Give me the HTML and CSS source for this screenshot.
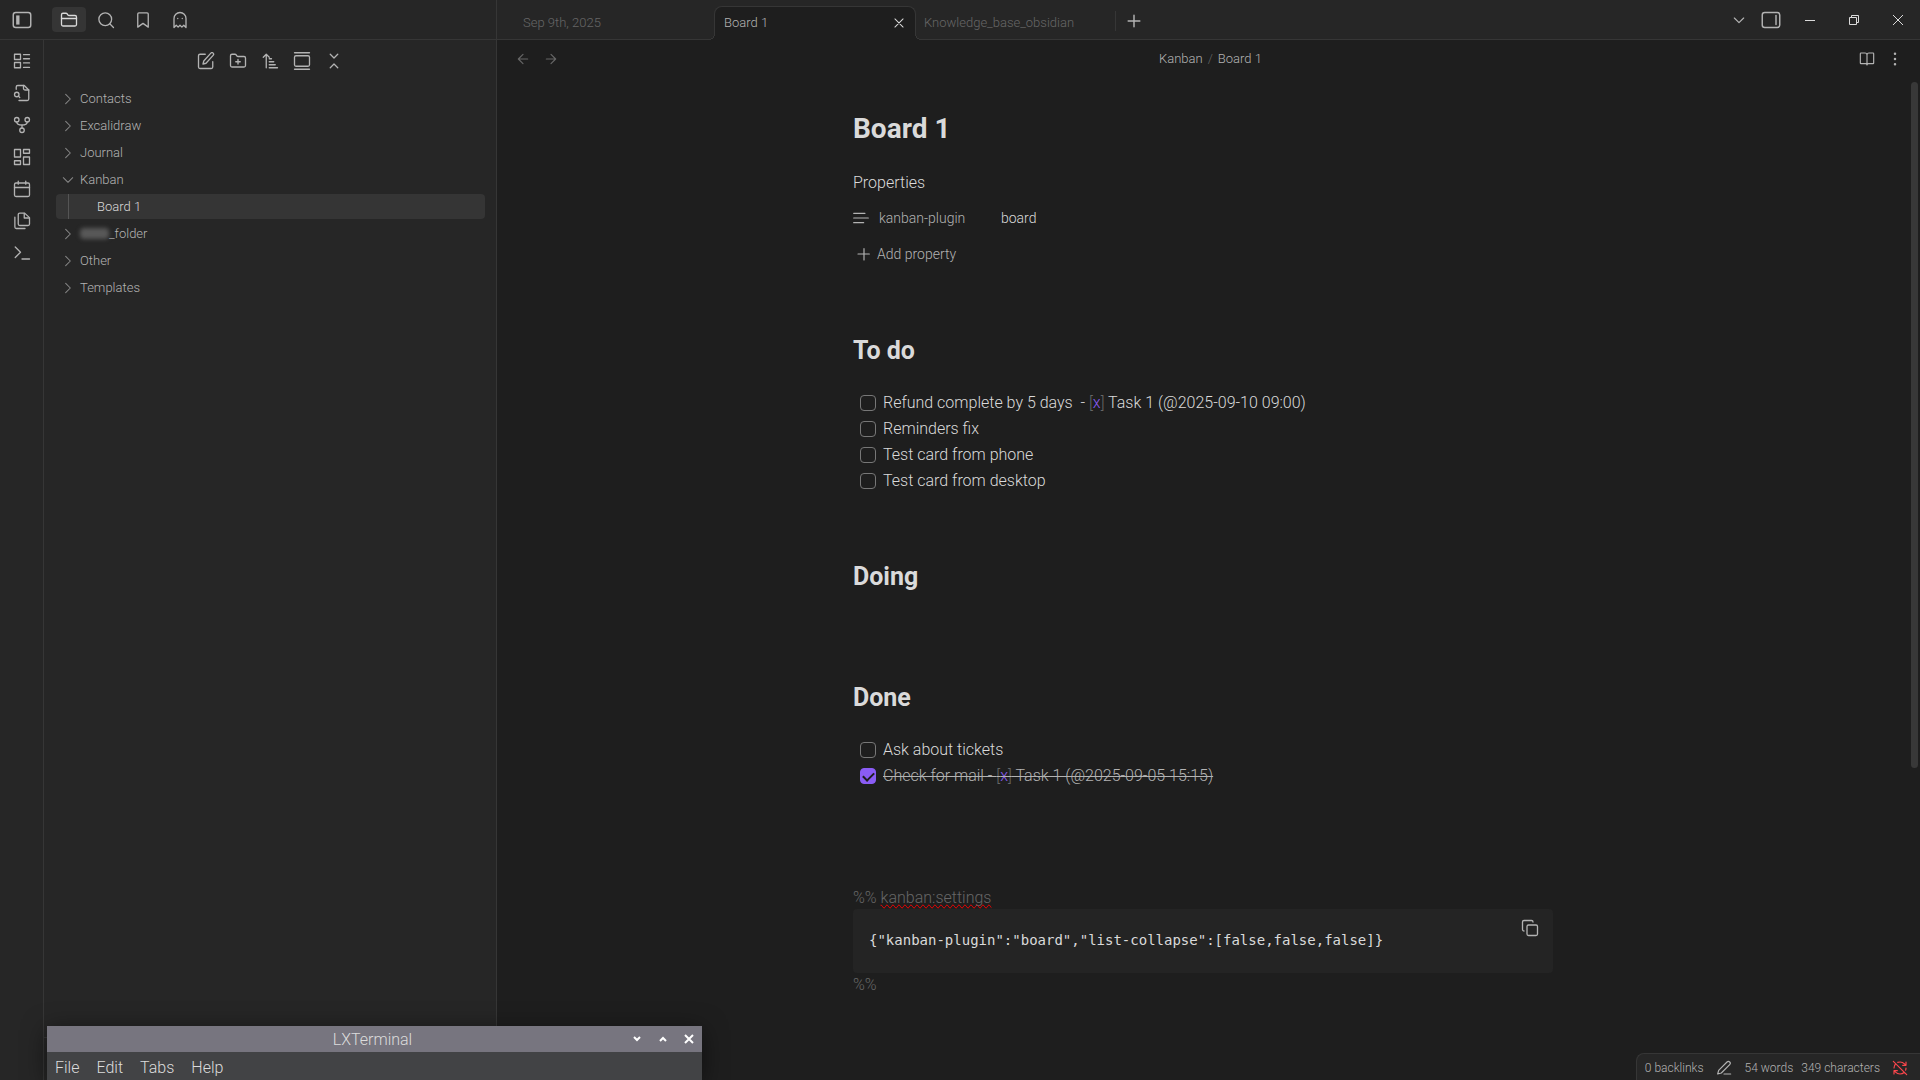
FILE: index.html
```html
<!DOCTYPE html>
<html lang="en">
<head>
<meta charset="utf-8">
<meta name="viewport" content="width=device-width, initial-scale=1">
<title>Board 1 - Obsidian</title>
<link rel="stylesheet" href="styles.css">
</head>
<body>
<div class="app">
  <header class="titlebar">
    <div class="titlebar-left">
      <div class="toggle-slot"><button class="icon-btn" aria-label="Toggle left sidebar"><svg class="icon icon-lg" viewBox="0 0 24 24"><rect x="1.5" y="3" width="21" height="18" rx="3"/><rect class="solid" x="5" y="6.500" width="4" height="11"/></svg></button></div>
      <nav class="side-tabs" aria-label="Sidebar panels">
        <button class="side-tab is-active" aria-label="Files"><svg class="icon" viewBox="0 0 24 24"><path d="M20 20a2 2 0 0 0 2-2V8a2 2 0 0 0-2-2h-7.900a2 2 0 0 1-1.690-.9L9.600 3.900A2 2 0 0 0 7.930 3H4a2 2 0 0 0-2 2v13a2 2 0 0 0 2 2Z"/><path d="M2 10h20"/></svg></button>
        <button class="side-tab" aria-label="Search"><svg class="icon" viewBox="0 0 24 24"><circle cx="11" cy="11" r="8.500"/><path d="m22 22-5-5"/></svg></button>
        <button class="side-tab" aria-label="Bookmarks"><svg class="icon" viewBox="0 0 24 24"><path d="M19 21.500l-7-5-7 5V4a1.500 1.500 0 0 1 1.500-1.500h11A1.500 1.500 0 0 1 19 4z"/></svg></button>
        <button class="side-tab" aria-label="Ghost Fade Focus"><svg class="icon" viewBox="0 0 24 24"><path d="M9 10h.01"/><path d="M15 10h.01"/><path d="M12 2a8 8 0 0 0-8 8v12l3-3 2.500 2.500L12 19l2.500 2.500L17 19l3 3V10a8 8 0 0 0-8-8z"/></svg></button>
      </nav>
    </div>
    <nav class="tabs" aria-label="Open notes">
      <button class="tab">Sep 9th, 2025</button>
      <div class="tab is-active"><a href="#note">Board 1</a><button class="icon-btn tab-close" aria-label="Close tab"><svg class="icon" viewBox="0 0 24 24"><path d="M19 5 5 19M5 5l14 14"/></svg></button></div>
      <button class="tab">Knowledge_base_obsidian</button>
      <button class="icon-btn new-tab" aria-label="New tab"><svg class="icon icon-lg" viewBox="0 0 24 24"><path d="M5 12h14M12 5v14"/></svg></button>
    </nav>
    <div class="window-tools">
      <button class="icon-btn" aria-label="Tab list"><svg class="icon icon-sm" viewBox="0 0 24 24"><path d="m5 9 7 7 7-7"/></svg></button>
      <button class="icon-btn" aria-label="Toggle right sidebar"><svg class="icon icon-lg" viewBox="0 0 24 24"><rect x="1.500" y="3" width="21" height="18" rx="3"/><path d="M18 6.500v11"/></svg></button>
    </div>
    <div class="window-controls">
      <button class="icon-btn" aria-label="Minimize"><svg class="glyph" viewBox="0 0 12 12"><path d="M1 6.500h10"/></svg></button>
      <button class="icon-btn" aria-label="Restore"><svg class="glyph" viewBox="0 0 12 12"><path d="M1.500 3.500h7v7h-7zM3.500 3.500v-2h7v7h-2"/></svg></button>
      <button class="icon-btn" aria-label="Close window"><svg class="glyph" viewBox="0 0 12 12"><path d="m1 1 10 10M11 1 1 11"/></svg></button>
    </div>
  </header>

  <div class="workspace">
    <nav class="ribbon" aria-label="Ribbon">
      <button class="icon-btn" aria-label="Layout"><svg class="icon" viewBox="0 0 24 24"><path d="M2 3h8v7H2zM2 14h8v7H2zM14 3.500h8M14 9h8M14 14.500h8M14 20.500h8"/></svg></button>
      <button class="icon-btn" aria-label="Quick switcher"><svg class="icon" viewBox="0 0 24 24"><path d="M14 2v4a2 2 0 0 0 2 2h5"/><path d="M4.300 7V4a2 2 0 0 1 2-2H15l6 6v12a2 2 0 0 1-2 2H8"/><circle cx="5" cy="14" r="3"/><path d="m9 18-1.800-1.800"/></svg></button>
      <button class="icon-btn" aria-label="Graph view"><svg class="icon" viewBox="0 0 24 24"><circle cx="12" cy="19" r="3"/><circle cx="5" cy="5" r="3"/><circle cx="19" cy="5" r="3"/><path d="M5 8c0 3 3 4 7 4s7-1 7-4M12 12v4"/></svg></button>
      <button class="icon-btn" aria-label="Canvas"><svg class="icon" viewBox="0 0 24 24"><path d="M2 2h8v10H2zM14 2h8v5h-8zM14 12h8v10h-8zM2 17h8v5H2z"/></svg></button>
      <button class="icon-btn" aria-label="Daily note"><svg class="icon" viewBox="0 0 24 24"><rect x="2" y="4" width="20" height="18" rx="2"/><path d="M2 10h20M7 1.500v4M17 1.500v4"/></svg></button>
      <button class="icon-btn" aria-label="Templates"><svg class="icon" viewBox="0 0 24 24"><path d="M15.500 1.500H9a2 2 0 0 0-2 2V16a2 2 0 0 0 2 2h11a2 2 0 0 0 2-2V7.500z"/><path d="M15 2v6h6M2.500 7v13a2 2 0 0 0 2 2H16"/></svg></button>
      <button class="icon-btn" aria-label="Command palette"><svg class="icon" viewBox="0 0 24 24"><path d="m3 18 7-7-7-7M12 20h10"/></svg></button>
    </nav>

    <aside class="sidebar">
      <div class="file-tools">
        <button class="icon-btn" aria-label="New note"><svg class="icon" viewBox="0 0 24 24"><path d="M11 3H4a2 2 0 0 0-2 2v15a2 2 0 0 0 2 2h15a2 2 0 0 0 2-2v-7"/><path d="M18.500 1.500a2.100 2.100 0 0 1 3 3L12 15l-4 1 1-4z"/></svg></button>
        <button class="icon-btn" aria-label="New folder"><svg class="icon" viewBox="0 0 24 24"><path d="M12 10v6M9 13h6M20 20a2 2 0 0 0 2-2V8a2 2 0 0 0-2-2h-7.900a2 2 0 0 1-1.690-.9L9.600 3.900A2 2 0 0 0 7.930 3H4a2 2 0 0 0-2 2v13a2 2 0 0 0 2 2Z"/></svg></button>
        <button class="icon-btn" aria-label="Sort order"><svg class="icon" viewBox="0 0 24 24"><path d="m3 7 4-4 4 4M7 3v18M11 9h3M11 13h6M11 17h8M11 21h11"/></svg></button>
        <button class="icon-btn" aria-label="Auto-reveal"><svg class="icon" viewBox="0 0 24 24"><path d="M2 1h20M2 23h20"/><rect x="2" y="5" width="20" height="14" rx="2"/></svg></button>
        <button class="icon-btn" aria-label="Collapse all"><svg class="icon" viewBox="0 0 24 24"><path d="m7 21 5-5 5 5M7 3l5 5 5-5"/></svg></button>
      </div>
      <ul class="tree">
        <li><button class="tree-row"><svg class="icon chevron" viewBox="0 0 24 24"><path d="m8 4 8 8-8 8"/></svg>Contacts</button></li>
        <li><button class="tree-row"><svg class="icon chevron" viewBox="0 0 24 24"><path d="m8 4 8 8-8 8"/></svg>Excalidraw</button></li>
        <li><button class="tree-row"><svg class="icon chevron" viewBox="0 0 24 24"><path d="m8 4 8 8-8 8"/></svg>Journal</button></li>
        <li><button class="tree-row"><svg class="icon chevron" viewBox="0 0 24 24"><path d="m4 8 8 8 8-8"/></svg>Kanban</button></li>
        <li><a class="tree-row tree-file" href="#note">Board 1</a></li>
        <li><button class="tree-row"><svg class="icon chevron" viewBox="0 0 24 24"><path d="m8 4 8 8-8 8"/></svg><span class="redacted"></span>_folder</button></li>
        <li><button class="tree-row"><svg class="icon chevron" viewBox="0 0 24 24"><path d="m8 4 8 8-8 8"/></svg>Other</button></li>
        <li><button class="tree-row"><svg class="icon chevron" viewBox="0 0 24 24"><path d="m8 4 8 8-8 8"/></svg>Templates</button></li>
      </ul>
      <div class="vault-bar"></div>
    </aside>

    <main class="pane">
      <div class="pane-header">
        <div class="history">
          <button class="icon-btn" aria-label="Back"><svg class="icon icon-sm" viewBox="0 0 24 24"><path d="m12 19-7-7 7-7M19 12H5"/></svg></button>
          <button class="icon-btn" aria-label="Forward"><svg class="icon icon-sm" viewBox="0 0 24 24"><path d="M5 12h14M12 5l7 7-7 7"/></svg></button>
        </div>
        <div class="crumbs"><a href="#kanban">Kanban</a><span class="slash">/</span><a href="#note">Board 1</a></div>
        <div class="pane-actions">
          <button class="icon-btn" aria-label="Reading view"><svg class="icon icon-sm" viewBox="0 0 24 24"><path d="M12 6v15M3 19a1 1 0 0 1-1-1V4a1 1 0 0 1 1-1h6a3 3 0 0 1 3 3 3 3 0 0 1 3-3h6a1 1 0 0 1 1 1v14a1 1 0 0 1-1 1h-7a2 2 0 0 0-2 2 2 2 0 0 0-2-2z"/></svg></button>
          <button class="icon-btn" aria-label="More options"><svg class="icon icon-sm dots" viewBox="0 0 24 24"><circle cx="12" cy="4" r="1"/><circle cx="12" cy="12" r="1"/><circle cx="12" cy="20" r="1"/></svg></button>
        </div>
      </div>
      <div class="scroller">
        <article class="note" id="note">
          <h1>Board 1</h1>
          <section class="properties">
            <div class="properties-title">Properties</div>
            <div class="property">
              <svg class="icon icon-sm" viewBox="0 0 24 24"><path d="M1 5h17M1 12h22M1 19h15"/></svg>
              <label for="prop">kanban-plugin</label>
              <input id="prop" type="text" value="board">
            </div>
            <button class="add-property"><svg class="icon icon-sm" viewBox="0 0 24 24"><path d="M3 12h17M12 4v17"/></svg>Add property</button>
          </section>

          <h2>To do</h2>
          <ul class="tasks">
            <li><label><input type="checkbox"><span>Refund complete by 5 days&nbsp; - <i>[<b>x</b>]</i> Task 1 (@2025-09-10 09:00)</span></label></li>
            <li><label><input type="checkbox"><span>Reminders fix</span></label></li>
            <li><label><input type="checkbox"><span>Test card from phone</span></label></li>
            <li><label><input type="checkbox"><span>Test card from desktop</span></label></li>
          </ul>

          <h2 class="empty-section">Doing</h2>

          <h2>Done</h2>
          <ul class="tasks">
            <li><label><input type="checkbox"><span>Ask about tickets</span></label></li>
            <li><label><input type="checkbox" checked><span>Check for mail - <i>[<b>x</b>]</i> Task 1 (@2025-09-05 15:15)</span></label></li>
          </ul>

          <div class="comment settings">%% <span class="misspelled">kanban:settings</span></div>
          <div class="code-block">
            <code>{"kanban-plugin":"board","list-collapse":[false,false,false]}</code>
            <button class="icon-btn" aria-label="Copy code"><svg class="icon" viewBox="0 0 24 24"><rect x="8" y="8" width="14" height="14" rx="2"/><path d="M4 16a2 2 0 0 1-2-2V4a2 2 0 0 1 2-2h10a2 2 0 0 1 2 2"/></svg></button>
          </div>
          <div class="comment">%%</div>
        </article>
        <div class="scrollbar"><div class="thumb"></div></div>
      </div>
    </main>
  </div>

  <footer class="status-bar">
    <span>0 backlinks</span>
    <svg class="icon" viewBox="0 0 24 24"><path d="M12 21h10M16.500 3a2.600 2.600 0 0 1 4 4L8 19.500 2.500 21 4 15.500z"/></svg>
    <span>54 words</span>
    <span>349 characters</span>
    <svg class="icon sync-off" viewBox="0 0 24 24"><path d="M21 8 18.700 5.700A9.500 9.500 0 0 0 12 3c-1.200 0-2.300.2-3.400.6M21 12a9 9 0 0 1-.6 3.300M21 3v5h-5M3 12a9 9 0 0 1 2.600-6.400M3 16l2.300 2.300A9.500 9.500 0 0 0 12 21c2.400 0 4.700-1 6.400-2.600M8 16H3v5M2 2l20 20"/></svg>
  </footer>

  <section class="terminal" aria-label="LXTerminal">
    <div class="terminal-title">
      <span>LXTerminal</span>
      <div class="terminal-controls">
        <button class="icon-btn" aria-label="Minimize terminal"><svg viewBox="0 0 10 10"><path d="m2 3 3 3 3-3"/></svg></button>
        <button class="icon-btn" aria-label="Maximize terminal"><svg viewBox="0 0 10 10"><path d="m2 7 3-3 3 3"/></svg></button>
        <button class="icon-btn" aria-label="Close terminal"><svg viewBox="0 0 10 10"><path d="m1 1 8 8M9 1 1 9"/></svg></button>
      </div>
    </div>
    <div class="terminal-menu"><button>File</button><button>Edit</button><button>Tabs</button><button>Help</button></div>
  </section>
</div>
</body>
</html>
```
FILE: styles.css
```css
:root {
  --bg: #1e1e1e;
  --bg-side: #262626;
  --line: #363636;
  --hover: #353535;
  --text: #dadada;
  --muted: #b3b3b3;
  --faint: #666;
  --accent: #8a5cf5;
}

* { box-sizing: border-box; }

body {
  margin: 0;
  background: var(--bg);
  color: var(--text);
  font: 300 16px/24px Roboto, "Noto Sans", sans-serif;
}

button, input { font: inherit; color: inherit; }
button { padding: 0; border: 0; background: none; }
a { color: inherit; text-decoration: none; }
ul { margin: 0; padding: 0; list-style: none; }

.app {
  position: relative;
  display: flex;
  flex-direction: column;
  min-height: 100vh;
  overflow: hidden;
}

.icon {
  display: block;
  flex: none;
  width: 18px;
  height: 18px;
  fill: none;
  stroke: currentColor;
  stroke-width: 1.75;
  stroke-linecap: round;
  stroke-linejoin: round;
}
.icon-sm { width: 16px; height: 16px; }
.icon-lg { width: 20px; height: 20px; }
.icon .solid { fill: currentColor; stroke: none; }
.dots { fill: currentColor; }
.icon-btn {
  display: flex;
  align-items: center;
  justify-content: center;
  color: var(--muted);
}

/* Title bar */
.titlebar {
  display: flex;
  height: 40px;
  background: var(--bg-side);
  border-bottom: 1px solid var(--line);
}
.titlebar-left {
  display: flex;
  align-items: center;
  flex: 0 0 497px;
  border-right: 1px solid var(--line);
}
.toggle-slot {
  display: flex;
  justify-content: center;
  width: 44px;
}
.side-tabs { display: flex; gap: 3px; padding-left: 8px; }
.side-tab {
  display: flex;
  align-items: center;
  justify-content: center;
  width: 34px;
  height: 25px;
  border-radius: 4px;
  color: var(--muted);
}
.side-tab.is-active { background: var(--hover); color: var(--text); }

.tabs {
  display: flex;
  flex: 1;
  align-items: flex-end;
  margin-bottom: -1px;
  padding-left: 18px;
  font-size: 13px;
}
.tab {
  display: flex;
  align-items: center;
  flex: 0 1 199px;
  height: 34px;
  padding: 0 8px;
  color: var(--faint);
  white-space: nowrap;
}
.tab.is-active {
  position: relative;
  justify-content: space-between;
  flex-basis: 202px;
  padding: 0 10px 0 9px;
  background: var(--bg);
  border: 1px solid var(--line);
  border-bottom-color: var(--bg);
  border-radius: 8px 8px 0 0;
  color: var(--muted);
}
.tab.is-active::before,
.tab.is-active::after {
  content: "";
  position: absolute;
  bottom: -1px;
  width: 6px;
  height: 6px;
}
.tab.is-active::before {
  left: -6px;
  background: radial-gradient(circle at 0 0, var(--bg-side) 5px, var(--line) 5px 6px, var(--bg) 6px);
}
.tab.is-active::after {
  right: -6px;
  background: radial-gradient(circle at 100% 0, var(--bg-side) 5px, var(--line) 5px 6px, var(--bg) 6px);
}
.tab-close { width: 12px; color: var(--text); }
.tab-close .icon { width: 14px; height: 14px; }
.new-tab { justify-content: flex-start; height: 38px; }
.new-tab::before {
  content: "";
  width: 1px;
  height: 20px;
  margin-right: 8px;
  background: var(--line);
}

.window-tools { display: flex; align-items: center; gap: 14px; padding-right: 7px; }
.window-controls { display: flex; align-items: center; }
.window-controls .icon-btn { width: 44px; height: 38px; }
.glyph { width: 12px; height: 12px; fill: none; stroke: var(--text); stroke-width: 1; }

/* Workspace columns */
.workspace { display: flex; flex: 1; }
.ribbon {
  display: flex;
  flex-direction: column;
  flex: 0 0 44px;
  gap: 14px;
  padding-top: 12px;
  background: var(--bg-side);
  border-right: 1px solid var(--line);
}
.sidebar {
  display: flex;
  flex-direction: column;
  flex: 0 0 453px;
  padding-top: 11px;
  background: var(--bg-side);
  border-right: 1px solid var(--line);
}
.file-tools {
  display: flex;
  justify-content: center;
  gap: 14px;
  height: 20px;
  margin-bottom: 15px;
}
.tree { padding: 0 11px 0 12px; font-size: 13px; color: var(--muted); }
.tree-row {
  display: flex;
  align-items: center;
  width: 100%;
  height: 25px;
  margin-bottom: 2px;
  padding-left: 5px;
  border-radius: 4px;
  text-align: left;
}
.chevron { width: 14px; height: 14px; margin-right: 5px; color: #888; }
.tree-file { padding-left: 12px; background: var(--hover); color: var(--text); }
.tree-file::before {
  content: "";
  width: 1px;
  height: 25px;
  margin-right: 28px;
  background: #555;
}
.redacted {
  width: 29px;
  height: 11px;
  border-radius: 4px;
  background: #585858;
  filter: blur(2px);
}
.vault-bar { height: 43px; margin-top: auto; border-top: 1px solid var(--line); }

/* Note pane */
.pane { display: flex; flex-direction: column; flex: 1; min-width: 0; }
.pane-header {
  display: grid;
  grid-template-columns: 1fr auto 1fr;
  align-items: center;
  height: 38px;
  padding: 0 17px 0 18px;
  font-size: 13px;
  color: var(--muted);
}
.history, .pane-actions { display: flex; gap: 12px; }
.history .icon-btn { color: var(--faint); }
.pane-actions { justify-content: flex-end; }
.crumbs { display: flex; gap: 5px; padding-left: 3px; }
.slash { color: var(--faint); }

.scroller { display: flex; flex: 1; justify-content: center; }
.note { width: 100%; max-width: 700px; margin: 0 auto; padding-top: 31px; }
.scrollbar { flex: 0 0 11px; padding: 4px 2px; }
.thumb { width: 7px; height: 69%; border-radius: 4px; background: #383838; }

h1, h2 { margin: 0; font-weight: 700; }
h1 { font-size: 28px; line-height: 40px; }
h2 { margin-bottom: 22px; font-size: 25px; line-height: 34px; }

.properties { margin: 22px 0 68px; font-size: 14px; }
.properties-title { margin-bottom: 11px; font-size: 16px; }
.property { display: flex; align-items: center; height: 24px; margin-bottom: 12px; color: var(--muted); }
.property label { width: 122px; margin-left: 10px; }
.property input { flex: 1; padding: 0; border: 0; background: none; color: var(--text); }
.add-property { display: flex; align-items: center; gap: 5px; height: 24px; padding-left: 3px; color: var(--muted); }

.tasks { margin-bottom: 66px; }
.empty-section { margin-bottom: 87px; }
.tasks label { display: flex; align-items: center; height: 26px; padding-left: 7px; white-space: nowrap; }
.tasks span { padding-left: 4px; }
.tasks input {
  display: grid;
  place-items: center;
  flex: none;
  appearance: none;
  width: 16px;
  height: 16px;
  margin: 0 3px 0 0;
  border: 1px solid #777;
  border-radius: 4px;
}
.tasks input:checked { border-color: var(--accent); background: var(--accent); }
.tasks input:checked::before {
  content: "";
  width: 9px;
  height: 5px;
  border: solid var(--bg);
  border-width: 0 0 2px 2px;
  transform: translateY(-1px) rotate(-45deg);
}
.tasks input:checked + span { color: var(--muted); text-decoration: line-through 1px; }
.tasks i { font-style: normal; color: var(--faint); }
.tasks b { font-weight: 300; color: var(--accent); }

.comment { color: var(--faint); }
.settings { margin-top: 97px; line-height: 23px; }
.misspelled { text-decoration: spelling-error; }
.code-block {
  display: flex;
  align-items: flex-start;
  justify-content: space-between;
  min-height: 64px;
  padding: 10px 14px 0 16px;
  border-radius: 4px;
  background: #242424;
}
code { padding-top: 9px; font: 14px/24px "DejaVu Sans Mono", monospace; }

/* Status bar sits over the lower right corner of the pane */
.status-bar {
  position: absolute;
  right: 0;
  bottom: 0;
  display: flex;
  align-items: center;
  gap: 8px;
  height: 27px;
  padding: 2px 12px 0 8px;
  border: solid var(--line);
  border-width: 1px 0 0 1px;
  border-radius: 8px 0 0 0;
  background: var(--bg-side);
  color: var(--muted);
  font-size: 12px;
}
.status-bar .icon { width: 16px; height: 16px; margin: 0 5px 0 4px; }
.status-bar .sync-off { margin-right: 0; color: #fb464c; }

/* Terminal window floating over the app */
.terminal {
  position: absolute;
  left: 47px;
  bottom: 0;
  width: 655px;
  box-shadow: 0 4px 24px rgba(0, 0, 0, .5);
  color: #dcdcdc;
}
.terminal-title {
  display: grid;
  grid-template-columns: 1fr auto 1fr;
  align-items: center;
  height: 26px;
  background: #77757f;
}
.terminal-title span { grid-column: 2; padding: 2px 4px 0 0; }
.terminal-controls { display: flex; justify-content: flex-end; gap: 16px; padding-right: 8px; }
.terminal-controls svg { width: 10px; height: 10px; fill: none; stroke: #fff; stroke-width: 2; }
.terminal-menu { display: flex; gap: 17px; height: 28px; padding: 3px 8px 0; background: #424345; }
```
